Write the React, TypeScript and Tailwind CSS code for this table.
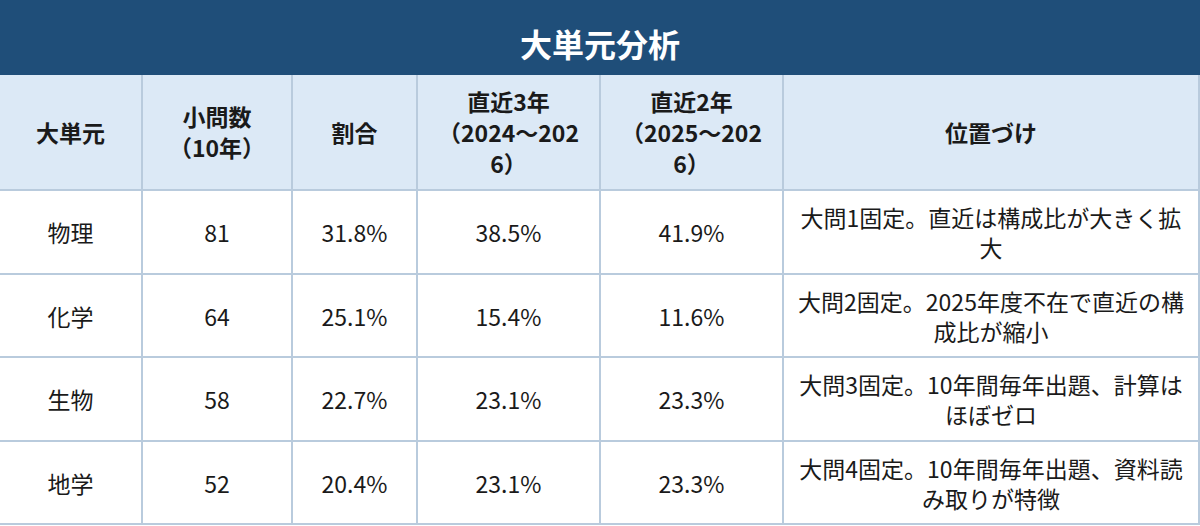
const HEADERS = [
  "大単元",
  "小問数\n（10年）",
  "割合",
  "直近3年\n（2024～202\n6）",
  "直近2年\n（2025～202\n6）",
  "位置づけ",
];

const ROWS = [
  ["物理", "81", "31.8%", "38.5%", "41.9%", "大問1固定。直近は構成比が大きく拡大"],
  ["化学", "64", "25.1%", "15.4%", "11.6%", "大問2固定。2025年度不在で直近の構成比が縮小"],
  ["生物", "58", "22.7%", "23.1%", "23.3%", "大問3固定。10年間毎年出題、計算はほぼゼロ"],
  ["地学", "52", "20.4%", "23.1%", "23.3%", "大問4固定。10年間毎年出題、資料読み取りが特徴"],
];

export default function App() {
  return (
    <div className="w-[1200px] h-[526px] bg-white font-['Noto_Sans_CJK_JP',sans-serif] text-[#1a1a1a]">
      <div className="h-[75px] pt-[10px] bg-[#1f4e79] flex items-center justify-center text-white text-[32px] font-bold">
        大単元分析
      </div>
      <div className="grid grid-cols-[141px_148px_123px_181px_181px_1fr] grid-rows-[114px_82px_81px_82px_81px] gap-[2px] bg-[#b9cbdd] pr-[2px] pb-[2px]">
        {HEADERS.map((h) => (
          <div
            key={h}
            className="bg-[#dce9f6] flex items-center justify-center text-center font-bold text-[23px] leading-[31px] whitespace-pre-line"
          >
            {h}
          </div>
        ))}
        {ROWS.map((row) =>
          row.map((cell, i) => (
            <div
              key={row[0] + i}
              className={
                "bg-white flex items-center justify-center text-center text-[23px] leading-[30px] " +
                (i === 5 ? "px-2.5" : "")
              }
            >
              {cell}
            </div>
          ))
        )}
      </div>
    </div>
  );
}
